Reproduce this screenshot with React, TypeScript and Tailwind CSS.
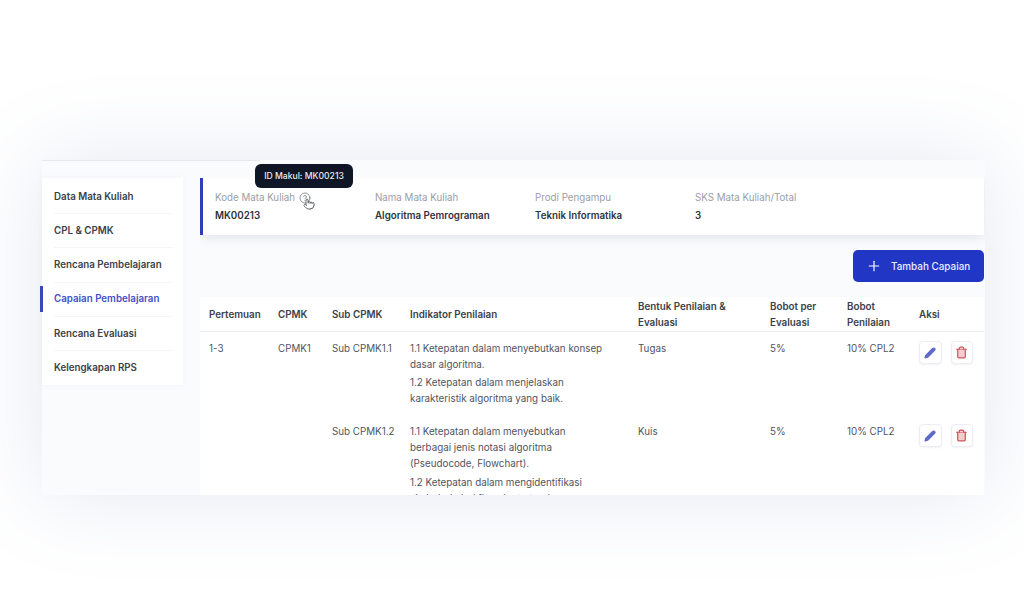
import { CircleHelp, Pencil, Plus, Pointer, Trash2 } from "lucide-react";

const nav = ["Data Mata Kuliah", "CPL & CPMK", "Rencana Pembelajaran", "Capaian Pembelajaran", "Rencana Evaluasi", "Kelengkapan RPS"];
const info = [
  ["Kode Mata Kuliah", "MK00213"],
  ["Nama Mata Kuliah", "Algoritma Pemrograman"],
  ["Prodi Pengampu", "Teknik Informatika"],
  ["SKS Mata Kuliah/Total", "3"],
];
const heads: [string, string][] = [
  ["Pertemuan", "w-[69px]"],
  ["CPMK", "w-[54px]"],
  ["Sub CPMK", "w-[78px]"],
  ["Indikator Penilaian", "w-[228px]"],
  ["Bentuk Penilaian & Evaluasi", "w-[132px]"],
  ["Bobot per Evaluasi", "w-[77px]"],
  ["Bobot Penilaian", "w-[72px]"],
  ["Aksi", "w-[74px]"],
];

function Actions() {
  return (
    <div className="flex gap-[9px]">
      <button className="flex h-[23px] w-[22.5px] items-center justify-center rounded-[4px] border border-[#eceef3] bg-white shadow-[0_1px_2px_rgba(30,40,90,0.06)]">
        <Pencil size={12} strokeWidth={2.2} className="fill-[#5f69c9] text-[#5f69c9]" />
      </button>
      <button className="flex h-[23px] w-[22.5px] items-center justify-center rounded-[4px] border border-[#eceef3] bg-white shadow-[0_1px_2px_rgba(30,40,90,0.06)]">
        <Trash2 size={13} strokeWidth={2.3} className="fill-[#f3cdd0] text-[#d6545e]" />
      </button>
    </div>
  );
}

export default function App() {
  return (
    <div className="h-[614px] w-[1024px] overflow-hidden bg-white pl-[42px] pt-[160px] font-['Inter',sans-serif]">
      <div className="relative h-[335px] w-[943px] bg-[#fafbfd] pt-[18px] shadow-[0_0_80px_rgba(105,125,185,0.18)]">
        <span className="absolute left-0 top-0 h-px w-[218px] bg-[#e6e8ee]" />
        <div className="flex h-full items-start gap-[17px]">
          <aside className="relative w-[141px] shrink-0 bg-white pl-[12px] pr-[10px] pt-[2px] shadow-[0_0_6px_rgba(110,125,170,0.05)]">
            {nav.map((n, i) => (
              <div
                key={n}
                className={`relative flex h-[34.2px] items-center whitespace-nowrap border-[#f5f6f9] pt-[1px] text-[9.75px] font-semibold ${i < 5 ? "border-b" : ""} ${i === 3 ? "text-[#3f4fc4]" : "text-[#3b3f49]"}`}
              >
                {n}
                {i === 3 && <span className="absolute left-[-14px] top-[3px] h-[26px] w-[2.5px] bg-[#3b49b8]" />}
              </div>
            ))}
          </aside>

          <main className="h-full min-w-0 flex-1 overflow-hidden">
            <section className="grid h-[57px] w-[784px] grid-cols-[160px_160px_160px_1fr] content-start gap-y-[4px] border-l-[3px] border-[#2f3db8] bg-white pl-[12px] pt-[13px] shadow-[0_3px_10px_rgba(70,85,130,0.13)]">
              {info.map(([label]) => (
                <div key={label} className="flex h-[14px] items-center text-[9.75px] leading-[14px] text-[#9a9ea8]">
                  {label}
                  {label === "Kode Mata Kuliah" && <CircleHelp size={12} strokeWidth={1.5} className="ml-[4px] text-[#6b7078]" />}
                </div>
              ))}
              {info.map(([, value]) => (
                <div key={value} className="h-[14px] text-[9.75px] font-semibold leading-[14px] text-[#2f323b]">
                  {value}
                </div>
              ))}
            </section>

            <div className="mt-[15px] flex w-[784px] justify-end">
              <button className="flex h-[32px] w-[131px] items-center gap-[9px] rounded-[5px] bg-[#2236c6] pl-[13px] text-[9.9px] font-medium text-[#e9ecff]">
                <Plus size={16} strokeWidth={1.8} className="text-white" />
                Tambah Capaian
              </button>
            </div>

            <div className="mt-[15px] h-[198px] w-[784px] overflow-hidden bg-white">
              <table className="w-[784px] table-fixed border-collapse text-left text-[9.8px] leading-[16px] text-[#50545e]">
                <thead>
                  <tr className="h-[34px] border-b border-[#eceef2]">
                    {heads.map(([h, w]) => (
                      <th key={h} className={`${w} pl-[9px] pr-[8px] pt-[2px] align-middle font-semibold text-[#3b3f49]`}>
                        {h}
                      </th>
                    ))}
                  </tr>
                </thead>
                <tbody>
                  <tr className="align-top">
                    <td className="pl-[9px] pt-[9px]">1-3</td>
                    <td className="pl-[9px] pt-[9px]">CPMK1</td>
                    <td className="whitespace-nowrap pl-[9px] pt-[9px]">Sub CPMK1.1</td>
                    <td className="pb-[9px] pl-[9px] pr-[20px] pt-[9px]">
                      <p>1.1 Ketepatan dalam menyebutkan konsep dasar algoritma.</p>
                      <p className="mt-[2px]">1.2 Ketepatan dalam menjelaskan karakteristik algoritma yang baik.</p>
                    </td>
                    <td className="pl-[9px] pt-[9px]">Tugas</td>
                    <td className="pl-[9px] pt-[9px]">5%</td>
                    <td className="whitespace-nowrap pl-[9px] pt-[9px]">10% CPL2</td>
                    <td className="pl-[9px] pt-[9px]"><Actions /></td>
                  </tr>
                  <tr className="align-top">
                    <td />
                    <td />
                    <td className="whitespace-nowrap pl-[9px] pt-[8px]">Sub CPMK1.2</td>
                    <td className="pl-[9px] pr-[32px] pt-[8px]">
                      <p>1.1 Ketepatan dalam menyebutkan berbagai jenis notasi algoritma (Pseudocode, Flowchart).</p>
                      <p className="mt-[3px]">1.2 Ketepatan dalam mengidentifikasi simbol-simbol flowchart standar.</p>
                    </td>
                    <td className="pl-[9px] pt-[8px]">Kuis</td>
                    <td className="pl-[9px] pt-[8px]">5%</td>
                    <td className="whitespace-nowrap pl-[9px] pt-[8px]">10% CPL2</td>
                    <td className="pl-[9px] pt-[8px]"><Actions /></td>
                  </tr>
                </tbody>
              </table>
            </div>
          </main>
        </div>

        <div className="absolute left-[213px] top-[4px] flex h-[24px] w-[98px] items-center justify-center rounded-[6px] bg-[#0f1626] text-[8.6px] font-medium text-[#e8eaef]">
          ID Makul: MK00213
        </div>
        <Pointer size={12} strokeWidth={1.5} className="absolute left-[261px] top-[38px] fill-white text-[#3a3d44]" />
      </div>
    </div>
  );
}
